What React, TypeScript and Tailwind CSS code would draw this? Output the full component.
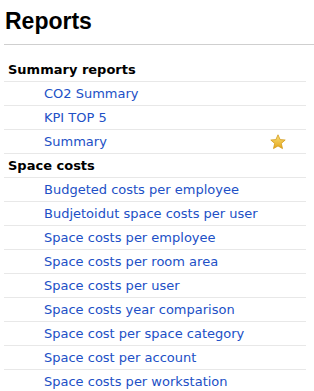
import React from "react";

const font = { fontFamily: '"DejaVu Sans", Verdana, sans-serif' };
const titleFont = { fontFamily: '"Liberation Sans", Tahoma, sans-serif' };

const Star: React.FC = () => (
  <svg width="16" height="16" viewBox="0 0 16 16">
    <defs>
      <linearGradient id="sg" x1="0" y1="0" x2="0" y2="1">
        <stop offset="0" stopColor="#fbe27a" />
        <stop offset="1" stopColor="#e3a51a" />
      </linearGradient>
    </defs>
    <path
      d="M8 0.8 L10.1 5.6 L15.2 6 L11.3 9.4 L12.5 14.6 L8 11.9 L3.5 14.6 L4.7 9.4 L0.8 6 L5.9 5.6 Z"
      fill="url(#sg)"
      stroke="#d39a1c"
      strokeWidth="0.8"
      strokeLinejoin="round"
    />
  </svg>
);

type Section = { title: string; items: { name: string; fav?: boolean }[] };

const sections: Section[] = [
  {
    title: "Summary reports",
    items: [{ name: "CO2 Summary" }, { name: "KPI TOP 5" }, { name: "Summary", fav: true }],
  },
  {
    title: "Space costs",
    items: [
      { name: "Budgeted costs per employee" },
      { name: "Budjetoidut space costs per user" },
      { name: "Space costs per employee" },
      { name: "Space costs per room area" },
      { name: "Space costs per user" },
      { name: "Space costs year comparison" },
      { name: "Space cost per space category" },
      { name: "Space cost per account" },
      { name: "Space costs per workstation" },
    ],
  },
];

export default function App() {
  return (
    <div className="w-[314px] h-[391px] overflow-hidden bg-white text-black" style={font}>
      <h1 className="pl-[5px] pt-[8px] text-[23px] leading-[26px] font-bold" style={titleFont}>
        Reports
      </h1>
      <div className="ml-[4px] mt-[10px] border-b border-[#cfcfcf]" />
      <div className="ml-[4px] mr-[8px] mt-[13px]">
        {sections.map((s) => (
          <div key={s.title}>
            <div className="h-[24px] border-b border-[#e8e8e8] flex items-center pl-[4px] text-[13px] font-bold">
              {s.title}
            </div>
            {s.items.map((it) => (
              <div
                key={it.name}
                className="h-[24px] border-b border-[#e8e8e8] flex items-center pl-[40px] pr-[20px] text-[13px]"
              >
                <a className="text-[#2150c6] flex-1" href="#">
                  {it.name}
                </a>
                {it.fav && <Star />}
              </div>
            ))}
          </div>
        ))}
      </div>
    </div>
  );
}
